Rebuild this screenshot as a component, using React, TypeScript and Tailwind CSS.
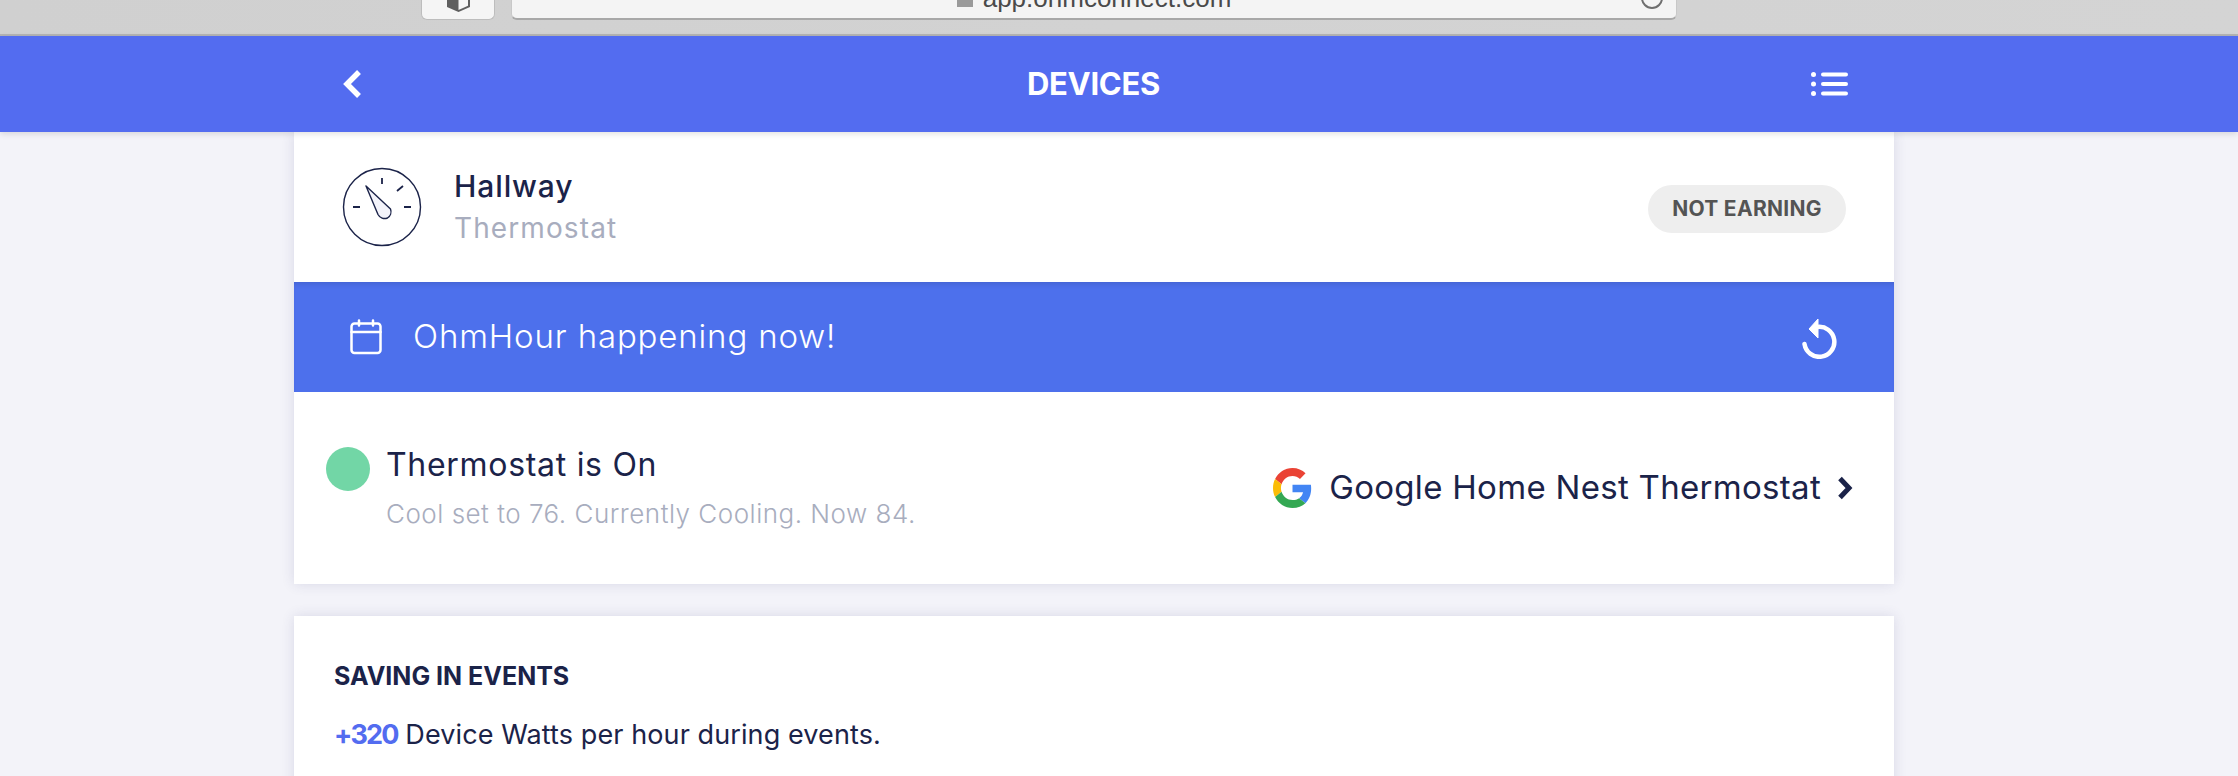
import React from 'react';

const font = { fontFamily: 'Inter' };

const Gauge = () => (
  <svg width="80" height="80" viewBox="0 0 80 80" fill="none" stroke="#1b2349" strokeWidth="1.4">
    <circle cx="40" cy="40" r="38.5" />
    <path d="M40 11v6M61 19l-6 5M11 40h7M62 40h7" strokeWidth="1.800" />
    <path d="M24 19L48.500 42a7.500 7.500 0 0 1-3 9a7.500 7.500 0 0 1-9.500-3.500z" fill="#f3f3fa" strokeLinejoin="round" />
  </svg>
);

const CalendarIcon = () => (
  <svg width="32" height="36" viewBox="0 0 32 36" fill="none" stroke="#fff" strokeWidth="2.500" strokeLinecap="round">
    <rect x="1.500" y="4.500" width="29" height="29.500" rx="3" />
    <path d="M1.500 13h29M9 1.500v5M23 1.500v5" />
  </svg>
);

const ResetIcon = () => (
  <svg width="36" height="40" viewBox="0 0 36 40" fill="none">
    <path d="M15 8A15 15 0 1 1 2.500 25" stroke="#fff" strokeWidth="4.500" strokeLinecap="round" />
    <path d="M16 0v19L7 10z" fill="#fff" stroke="#fff" strokeWidth="1" strokeLinejoin="round" />
  </svg>
);

const GoogleLogo = () => (
  <svg width="39" height="40" viewBox="0 0 48 48" preserveAspectRatio="none">
    <path fill="#EA4335" d="M24 9.500c3.540 0 6.710 1.220 9.210 3.600l6.850-6.850C35.900 2.380 30.470 0 24 0 14.620 0 6.510 5.380 2.560 13.220l7.980 6.190C12.430 13.720 17.740 9.500 24 9.500z" />
    <path fill="#4285F4" d="M46.980 24.550c0-1.570-.15-3.090-.38-4.550H24v9.020h12.940c-.58 2.960-2.260 5.480-4.780 7.180l7.730 6c4.510-4.180 7.090-10.360 7.090-17.650z" />
    <path fill="#FBBC05" d="M10.530 28.590c-.48-1.450-.76-2.990-.76-4.590s.27-3.140.76-4.590l-7.980-6.190C.92 16.460 0 20.120 0 24c0 3.880.92 7.540 2.560 10.780l7.970-6.190z" />
    <path fill="#34A853" d="M24 48c6.480 0 11.930-2.130 15.890-5.810l-7.730-6c-2.150 1.450-4.920 2.300-8.160 2.300-6.260 0-11.570-4.220-13.470-9.910l-7.980 6.190C6.510 42.620 14.620 48 24 48z" />
  </svg>
);

export default function App() {
  return (
    <div className="h-[776px] overflow-hidden bg-[#f3f3f9] text-[#1b2349]" style={font}>
      {/* Browser chrome */}
      <div className="h-[36px] bg-gradient-to-r from-[#d0d0d0] to-[#d4d4d4] border-b-2 border-[#b4b4b4] flex items-start pl-[421px] gap-[16px]">
        <div className="w-[74px] h-[20px] bg-[#f5f5f5] rounded-b-[6px] border border-t-0 border-[#bdbdbd] flex justify-center overflow-hidden">
          <svg width="23" height="12" viewBox="0 0 23 12">
            <path d="M0 0h23v7l-11.500 5L0 7z" fill="#5f5f5f" />
            <path d="M11.500 0h9.500v5.800l-9.500 4.200z" fill="#f5f5f5" />
          </svg>
        </div>
        <div className="w-[1166px] h-[20px] bg-[#f4f4f4] rounded-b-[6px] border-b-2 border-x border-[#a8a8a8] border-x-[#c8c8c8] flex items-end overflow-hidden pr-[13px]">
          <div className="flex-1 flex justify-center items-center gap-[10px] h-[20px] translate-y-[-10px] pl-[35px]">
            <span className="w-[16px] h-[10px] bg-[#9a9a9a] mt-[8px]" />
            <span className="text-[26px] leading-[24px] text-[#4a4a4a]" style={{ fontFamily: 'Liberation Sans' }}>app.ohmconnect.com</span>
          </div>
          <span className="w-[22px] h-[22px] mb-[9px] rounded-full border-2 border-[#6f6f6f] shrink-0" />
        </div>
      </div>

      {/* Header */}
      <div className="h-[96px] bg-[#536cf0] shadow-[0_2px_6px_rgba(0,0,0,0.12)] relative">
        <div className="w-[1600px] h-full ml-[294px] flex items-center justify-between pl-[48px] pr-[45px]">
          <svg width="20" height="30" viewBox="0 0 20 30" fill="none" stroke="#fff" strokeWidth="5.500">
            <path d="M17 3L5 15l12 12" />
          </svg>
          <span className="ml-[14px] text-[31px] font-bold text-white tracking-[-0.3px]">DEVICES</span>
          <svg width="38" height="26" viewBox="0 0 38 26" fill="#fff">
            <circle cx="2.500" cy="3.500" r="2.500" />
            <circle cx="2.500" cy="13" r="2.500" />
            <circle cx="2.500" cy="22.500" r="2.500" />
            <rect x="10" y="1.500" width="27" height="4" rx="2" />
            <rect x="10" y="11" width="27" height="4" rx="2" />
            <rect x="10" y="20.500" width="27" height="4" rx="2" />
          </svg>
        </div>
      </div>

      <div className="w-[1600px] ml-[294px] flex flex-col">
        {/* Device card */}
        <div className="bg-white shadow-[0_0_12px_rgba(60,60,120,0.14)]">
          <div className="h-[150px] flex items-center pl-[48px] pr-[48px]">
            <Gauge />
            <div className="ml-[32px] flex flex-col">
              <span className="text-[30px] leading-[42px] font-medium tracking-[0.9px]">Hallway</span>
              <span className="text-[28px] leading-[42px] text-[#a8adbe] tracking-[1.1px]">Thermostat</span>
            </div>
            <span className="ml-auto mt-[3px] w-[198px] h-[48px] rounded-full bg-[#eeeeee] text-[#545454] text-[21px] font-bold flex items-center justify-center tracking-[0.3px]">NOT EARNING</span>
          </div>

          <div className="h-[110px] bg-[#4d70ec] flex items-center pl-[56px] pr-[56px] shadow-[inset_0_5px_6px_-4px_rgba(0,0,0,0.15)]">
            <CalendarIcon />
            <span className="ml-[31px] text-[33px] text-white font-light tracking-[0.85px]">OhmHour happening now!</span>
            <span className="ml-auto mt-[4px]"><ResetIcon /></span>
          </div>

          <div className="h-[192px] flex items-center justify-between pl-[32px] pr-[41px]">
            <div className="flex flex-col mt-[3px]">
              <div className="flex items-center gap-[16px]">
                <span className="w-[44px] h-[44px] rounded-full bg-[#72d6a6]" />
                <span className="text-[32px] leading-[44px] tracking-[0.7px] -mt-[7px]">Thermostat is On</span>
              </div>
              <span className="ml-[60px] mt-[4px] text-[26px] leading-[38px] text-[#a8adbe] font-light tracking-[0.5px]">Cool set to 76. Currently Cooling. Now 84.</span>
            </div>
            <div className="flex items-center">
              <GoogleLogo />
              <span className="ml-[17px] text-[33px] tracking-[0.3px]">Google Home Nest Thermostat</span>
              <svg className="ml-[16px]" width="16" height="24" viewBox="0 0 16 24" fill="none" stroke="#1b2349" strokeWidth="5">
                <path d="M3 2.500L12 12l-9 9.500" />
              </svg>
            </div>
          </div>
        </div>

        {/* Savings card */}
        <div className="mt-[32px] h-[200px] bg-white shadow-[0_0_12px_rgba(60,60,120,0.14)] pl-[40px] pt-[42px]">
          <div className="text-[25px] leading-[36px] font-bold">SAVING IN EVENTS</div>
          <div className="mt-[21px] text-[27px] leading-[40px] tracking-[0.1px]">
            <span className="font-bold text-[#536cf0] tracking-[-1.8px]">+320</span> Device Watts per hour during events.
          </div>
        </div>
      </div>
    </div>
  );
}
